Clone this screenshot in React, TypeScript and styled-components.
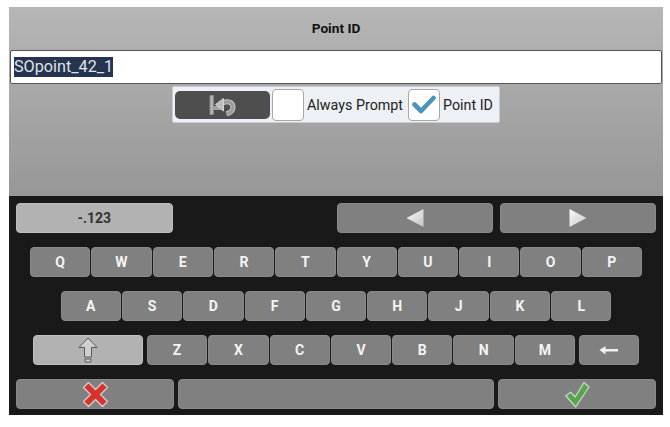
import styled, { createGlobalStyle } from 'styled-components';

const GlobalStyle = createGlobalStyle`
  html, body {
    margin: 0;
    padding: 0;
    background: #fff;
  }
  body {
    font-family: Roboto, "Liberation Sans", sans-serif;
  }
`;

const ROW_ONE = ['Q', 'W', 'E', 'R', 'T', 'Y', 'U', 'I', 'O', 'P'];
const ROW_TWO = ['A', 'S', 'D', 'F', 'G', 'H', 'J', 'K', 'L'];
const ROW_THREE = ['Z', 'X', 'C', 'V', 'B', 'N', 'M'];

const UndoIcon = () => (
  <svg width="27" height="22" viewBox="0 0 27 22">
    <path d="M1 1.5h3.4v19H1z" fill="#b4b4b4" stroke="#8c8c8c" strokeWidth="1" />
    <path d="M4.5 14h8" stroke="#a2a2a2" strokeWidth="4" />
    <path d="M13 9.5C18 6.2 24 8.2 24 13c0 3.6-3 6-6.5 7" fill="none" stroke="#d4d4d4" strokeWidth="5" />
    <path d="M13 9.5C18 6.2 24 8.2 24 13c0 3.6-3 6-6.5 7" fill="none" stroke="#9c9c9c" strokeWidth="3.4" />
    <path d="M6.5 10.5L14.5 4.5v12.5z" fill="#bdbdbd" stroke="#d4d4d4" strokeWidth="1" strokeLinejoin="round" />
  </svg>
);

const CheckMark = () => (
  <svg width="24" height="19" viewBox="0 0 24 19">
    <path d="M2.5 9.5l6.5 6.5L21.5 3" fill="none" stroke="#4a95b8" strokeWidth="4.6" strokeLinecap="round" strokeLinejoin="round" />
  </svg>
);

const LeftTriangle = () => (
  <svg width="18" height="20" viewBox="0 0 18 20">
    <defs>
      <linearGradient id="triLeft" x1="0" y1="0" x2="1" y2="1">
        <stop offset="0" stopColor="#fafafa" />
        <stop offset="1" stopColor="#c4c4c4" />
      </linearGradient>
    </defs>
    <path d="M0.5 10L17.5 1v18z" fill="url(#triLeft)" />
  </svg>
);

const RightTriangle = () => (
  <svg width="18" height="20" viewBox="0 0 18 20">
    <defs>
      <linearGradient id="triRight" x1="0" y1="0" x2="1" y2="1">
        <stop offset="0" stopColor="#fafafa" />
        <stop offset="1" stopColor="#c8c8c8" />
      </linearGradient>
    </defs>
    <path d="M17.5 10L0.5 1v18z" fill="url(#triRight)" />
  </svg>
);

const ShiftIcon = () => (
  <svg width="20" height="26" viewBox="0 0 20 26">
    <path
      d="M10 1L19 10.5H13.5V20H6.5V10.5H1z"
      fill="#cfcfcf"
      stroke="#585858"
      strokeWidth="1"
      strokeLinejoin="miter"
    />
    <path d="M7 22h6v3H7z" fill="#cfcfcf" stroke="#585858" strokeWidth="1" />
  </svg>
);

const BackspaceIcon = () => (
  <svg width="20" height="10" viewBox="0 0 20 10">
    <path d="M0.5 5L6.5 1v3H19v2.4H6.5v3z" fill="#f0f0f0" />
  </svg>
);

const CrossIcon = () => (
  <svg width="27" height="27" viewBox="0 0 27 27">
    <path
      d="M6.5 1.5L13.5 8.5 20.5 1.5 25.5 6.5 18.5 13.5 25.5 20.5 20.5 25.5 13.5 18.5 6.5 25.5 1.5 20.5 8.5 13.5 1.5 6.5z"
      fill="#d8322c"
      stroke="#cfcfcf"
      strokeWidth="1.4"
      strokeLinejoin="round"
    />
  </svg>
);

const OkIcon = () => (
  <svg width="26" height="27" viewBox="0 0 26 27">
    <path
      d="M20 1.5L25 6 11.7 26 1.7 14.7 6.7 11.3 11.2 16z"
      fill="#53a84a"
      stroke="#d0d0d0"
      strokeWidth="1.3"
      strokeLinejoin="round"
    />
  </svg>
);

export default function App() {
  return (
    <>
      <GlobalStyle />
      <Page>
        <Screen>
          <TopPanel>
            <Title>Point ID</Title>
            <TextField>
              <Selected>SOpoint_42_1</Selected>
            </TextField>
            <Options>
              <UndoButton>
                <UndoIcon />
              </UndoButton>
              <CheckBox />
              <OptionLabel>Always Prompt</OptionLabel>
              <CheckBox>
                <CheckMark />
              </CheckBox>
              <OptionLabel>Point ID</OptionLabel>
            </Options>
          </TopPanel>
          <Keyboard>
            <ModeRow>
              <WideKey $light>-.123</WideKey>
              <NavKeys>
                <WideKey>
                  <LeftTriangle />
                </WideKey>
                <WideKey>
                  <RightTriangle />
                </WideKey>
              </NavKeys>
            </ModeRow>
            <KeyRow>
              {ROW_ONE.map((k) => (
                <Key key={k}>{k}</Key>
              ))}
            </KeyRow>
            <KeyRow>
              {ROW_TWO.map((k) => (
                <Key key={k}>{k}</Key>
              ))}
            </KeyRow>
            <KeyRow>
              <ShiftKey>
                <ShiftIcon />
              </ShiftKey>
              {ROW_THREE.map((k) => (
                <Key key={k}>{k}</Key>
              ))}
              <BackKey>
                <BackspaceIcon />
              </BackKey>
            </KeyRow>
            <ActionRow>
              <ActionKey>
                <CrossIcon />
              </ActionKey>
              <SpaceKey />
              <ActionKey>
                <OkIcon />
              </ActionKey>
            </ActionRow>
          </Keyboard>
        </Screen>
      </Page>
    </>
  );
}

const Page = styled.div`
  width: 670px;
  height: 427px;
  padding: 7px 7px 12px 9px;
  box-sizing: border-box;
  overflow: hidden;
`;

const Screen = styled.div`
  width: 654px;
  height: 408px;
  display: flex;
  flex-direction: column;
`;

const TopPanel = styled.div`
  height: 189px;
  display: flex;
  flex-direction: column;
  align-items: center;
  padding: 0 1px;
  box-sizing: border-box;
  background: linear-gradient(to bottom, #b6b6b6, #979797);
`;

const Title = styled.div`
  height: 43px;
  line-height: 43px;
  font-size: 13.7px;
  font-weight: 700;
  color: #111;
`;

const TextField = styled.div`
  width: 652px;
  height: 34px;
  display: flex;
  align-items: center;
  padding-left: 3px;
  box-sizing: border-box;
  background: #fff;
  border: 1px solid #555;
  border-radius: 2px;
  font-size: 16.2px;
`;

const Selected = styled.span`
  background: #27344f;
  color: #dfe3ea;
  line-height: 20px;
`;

const Options = styled.div`
  margin-top: 2px;
  height: 37px;
  width: 328px;
  display: flex;
  align-items: center;
  padding: 0 2px;
  box-sizing: border-box;
  background: #edf1f5;
  border: 1px solid #c9ccd0;
  border-radius: 2px;
`;

const UndoButton = styled.div`
  width: 95px;
  height: 28px;
  margin-right: 2px;
  flex: none;
  display: flex;
  align-items: center;
  justify-content: center;
  background: #4e4e4e;
  border-radius: 5px;
`;

const CheckBox = styled.div`
  width: 32px;
  height: 32px;
  flex: none;
  display: flex;
  align-items: center;
  justify-content: center;
  box-sizing: border-box;
  background: #fff;
  border: 1px solid #a8a8a8;
  border-radius: 4px;
`;

const OptionLabel = styled.span`
  padding: 0 5px 0 3px;
  font-size: 14.3px;
  color: #222;
  white-space: nowrap;
`;

const Keyboard = styled.div`
  flex: 1;
  display: flex;
  flex-direction: column;
  gap: 14px;
  padding: 7px 7px 0;
  box-sizing: border-box;
  background: #191919;
`;

const KeyBase = styled.div`
  height: 30px;
  flex: none;
  display: flex;
  align-items: center;
  justify-content: center;
  box-sizing: border-box;
  background: #808080;
  border: 1px solid #8a8a8a;
  border-radius: 4px;
  color: #f4f4f4;
  font-size: 14px;
  font-weight: 700;
`;

const ModeRow = styled.div`
  display: flex;
  justify-content: space-between;
`;

const NavKeys = styled.div`
  display: flex;
  gap: 6.5px;
`;

const WideKey = styled(KeyBase)<{ $light?: boolean }>`
  width: 156.5px;
  background: ${({ $light }) => ($light ? '#b2b2b2' : '#808080')};
  border-color: ${({ $light }) => ($light ? '#bcbcbc' : '#8a8a8a')};
  color: ${({ $light }) => ($light ? '#333' : '#f4f4f4')};
`;

const KeyRow = styled.div`
  display: flex;
  justify-content: center;
  gap: 1px;
`;

const Key = styled(KeyBase)`
  width: 60.3px;
`;

const ShiftKey = styled(KeyBase)`
  width: 110px;
  margin-right: 3px;
  background: #b2b2b2;
  border-color: #c0c0c0;
`;

const BackKey = styled(KeyBase)`
  width: 60px;
  margin-left: 3px;
`;

const ActionRow = styled.div`
  display: flex;
  gap: 4px;
`;

const ActionKey = styled(KeyBase)`
  width: 158px;
`;

const SpaceKey = styled(KeyBase)`
  flex: 1;
`;
